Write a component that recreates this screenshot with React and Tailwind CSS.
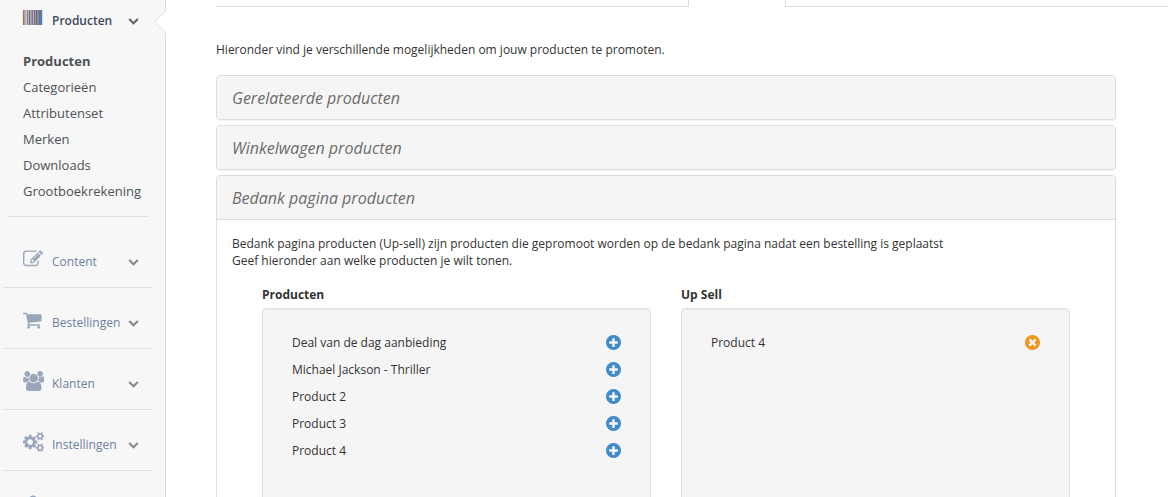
import React, { useState } from "react";

const ICONS = {
  edit: {
    viewBox: "0 0 1792 1792",
    path: "M888 1184l116-116-152-152-116 116v56h96v96h56zm440-720q-16-16-33 1l-350 350q-17 17-1 33t33-1l350-350q17-17 1-33zm80 594v190q0 119-84.5 203.5t-203.5 84.5h-832q-119 0-203.5-84.5t-84.5-203.5v-832q0-119 84.5-203.5t203.5-84.5h832q63 0 117 25 15 7 18 23 3 17-9 29l-49 49q-14 14-32 8-23-6-45-6h-832q-66 0-113 47t-47 113v832q0 66 47 113t113 47h832q66 0 113-47t47-113v-126q0-13 9-22l64-64q15-15 35-7t20 29zm-96-738l288 288-672 672h-288v-288zm444 132l-92 92-288-288 92-92q28-28 68-28t68 28l152 152q28 28 28 68t-28 68z",
  },
  cart: {
    viewBox: "64 0 1792 1792",
    path: "M704 1536q0 52-38 90t-90 38-90-38-38-90 38-90 90-38 90 38 38 90zm896 0q0 52-38 90t-90 38-90-38-38-90 38-90 90-38 90 38 38 90zm128-1088v512q0 24-16.5 42.5t-40.5 21.5l-1044 122q13 60 13 70 0 16-24 64h920q26 0 45 19t19 45-19 45-45 19h-1024q-26 0-45-19t-19-45q0-11 8-31.5t16-36 21.5-40 15.5-29.5l-177-823h-204q-26 0-45-19t-19-45 19-45 45-19h256q16 0 28.5 6.5t19.5 15.5 13 24.5 8 26 5.5 29.5 4.5 26h1201q26 0 45 19t19 45z",
  },
  users: {
    viewBox: "0 0 1920 1792",
    path: "M593 896q-162 5-265 128h-134q-82 0-138-40.5t-56-118.5q0-353 124-353 6 0 43.5 21t97.5 42.5 119 21.5q67 0 133-23-5 37-5 66 0 159 93 286zm1071 637q0 120-73 189.5t-194 69.5h-874q-121 0-194-69.5t-73-189.5q0-53 3.5-103.5t14-109 26.5-108.5 43-97.5 62-81 85.5-53.5 111.5-20q10 0 43 21.5t73 48 107 48 135 21.5 135-21.5 107-48 73-48 43-21.5q61 0 111.5 20t85.5 53.5 62 81 43 97.5 26.5 108.5 14 109 3.5 103.5zm-1024-1277q0 106-75 181t-181 75-181-75-75-181 75-181 181-75 181 75 75 181zm704 384q0 159-112.5 271.5t-271.5 112.5-271.5-112.5-112.5-271.5 112.5-271.5 271.5-112.5 271.5 112.5 112.5 271.5zm576 225q0 78-56 118.5t-138 40.5h-134q-103-123-265-128 93-127 93-286 0-29-5-66 66 23 133 23 59 0 119-21.5t97.5-42.5 43.5-21q124 0 124 353zm-128-609q0 106-75 181t-181 75-181-75-75-181 75-181 181-75 181 75 75 181z",
  },
  cogs: {
    viewBox: "0 0 1920 1792",
    path: "M896 896q0-106-75-181t-181-75-181 75-75 181 75 181 181 75 181-75 75-181zm768 512q0-52-38-90t-90-38-90 38-38 90q0 53 37.5 90.5t90.5 37.5 90.5-37.5 37.5-90.5zm0-1024q0-52-38-90t-90-38-90 38-38 90q0 53 37.5 90.5t90.5 37.5 90.5-37.5 37.5-90.5zm-384 421v185q0 10-7 19.5t-16 10.5l-155 24q-11 35-32 76 34 48 90 115 7 11 7 20 0 12-7 19-23 30-82.5 89.5t-78.5 59.5q-11 0-21-7l-115-90q-37 19-77 31-11 108-23 155-7 24-30 24h-186q-11 0-20-7.5t-10-17.5l-23-153q-34-10-75-31l-118 89q-7 7-20 7-11 0-21-8-144-133-144-160 0-9 7-19 10-14 41-53t47-61q-23-44-35-82l-152-24q-10-1-17-9.5t-7-19.5v-185q0-10 7-19.5t16-10.5l155-24q11-35 32-76-34-48-90-115-7-11-7-20 0-12 7-20 22-30 82-89t79-59q11 0 21 7l115 90q34-18 77-32 11-108 23-154 7-24 30-24h186q11 0 20 7.5t10 17.5l23 153q34 10 75 31l118-89q8-7 20-7 11 0 21 8 144 133 144 160 0 8-7 19-12 16-42 54t-45 60q23 48 34 82l152 23q10 2 17 10.5t7 19.5zm640 533v140q0 16-149 31-12 27-30 52 51 113 51 138 0 4-4 7-122 71-124 71-8 0-46-47t-52-68q-20 2-30 2t-30-2q-14 21-52 68t-46 47q-2 0-124-71-4-3-4-7 0-25 51-138-18-25-30-52-149-15-149-31v-140q0-16 149-31 13-29 30-52-51-113-51-138 0-4 4-7 4-2 35-20t59-34 30-16q8 0 46 46.5t52 67.5q20-2 30-2t30 2q51-71 92-112l6-2q4 0 124 70 4 3 4 7 0 25-51 138 17 23 30 52 149 15 149 31zm0-1024v140q0 16-149 31-12 27-30 52 51 113 51 138 0 4-4 7-122 71-124 71-8 0-46-47t-52-68q-20 2-30 2t-30-2q-14 21-52 68t-46 47q-2 0-124-71-4-3-4-7 0-25 51-138-18-25-30-52-149-15-149-31v-140q0-16 149-31 13-29 30-52-51-113-51-138 0-4 4-7 4-2 35-20t59-34 30-16q8 0 46 46.5t52 67.5q20-2 30-2t30 2q51-71 92-112l6-2q4 0 124 70 4 3 4 7 0 25-51 138 17 23 30 52 149 15 149 31z",
  },
  user: {
    viewBox: "0 0 1664 1792",
    path: "M1536 1399q0 109-62.5 187t-150.5 78h-854q-88 0-150.5-78t-62.5-187q0-85 8.5-160.5t31.5-152 58.5-131 94-89 134.5-34.5q131 128 313 128t313-128q76 0 134.5 34.5t94 89 58.5 131 31.5 152 8.5 160.5zm-256-887q0 159-112.5 271.5t-271.5 112.5-271.5-112.5-112.5-271.5 112.5-271.5 271.5-112.5 271.5 112.5 112.5 271.5z",
  },
  chevron: {
    viewBox: "0 0 1792 1792",
    path: "M1683 808l-742 741q-19 19-45 19t-45-19l-742-741q-19-19-19-45.5t19-45.5l166-165q19-19 45-19t45 19l531 531 531-531q19-19 45-19t45 19l166 165q19 19 19 45.5t-19 45.5z",
  },
  plus: {
    viewBox: "128 128 1536 1536",
    path: "M1344 960v-128q0-26-19-45t-45-19h-256v-256q0-26-19-45t-45-19h-128q-26 0-45 19t-19 45v256h-256q-26 0-45 19t-19 45v128q0 26 19 45t45 19h256v256q0 26 19 45t45 19h128q26 0 45-19t19-45v-256h256q26 0 45-19t19-45zm320-64q0 209-103 385.5t-279.5 279.5-385.5 103-385.5-103-279.5-279.5-103-385.5 103-385.5 279.5-279.5 385.5-103 385.5 103 279.5 279.5 103 385.5z",
  },
  remove: {
    viewBox: "128 128 1536 1536",
    path: "M1277 1122q0-26-19-45l-181-181 181-181q19-19 19-45 0-27-19-46l-90-90q-19-19-46-19-26 0-45 19l-181 181-181-181q-19-19-45-19-27 0-46 19l-90 90q-19 19-19 46 0 26 19 45l181 181-181 181q-19 19-19 45 0 27 19 46l90 90q19 19 46 19 26 0 45-19l181-181 181 181q19 19 45 19 27 0 46-19l90-90q19-19 19-46zm387-226q0 209-103 385.5t-279.5 279.5-385.5 103-385.5-103-279.5-279.5-103-385.5 103-385.5 279.5-279.5 385.5-103 385.5 103 279.5 279.5 103 385.5z",
  },
};

const BARS = [
  "#f6f3a0", "#7c7a94", "#a89cb4", "#dca8b4", "#f0b4bc", "#8480a4", "#98c0d8",
  "#70707c", "#c49cb8", "#90a888", "#7078a8", "#c8a8d0", "#78706c", "#b09888",
  "#5c6c9c", "#a08878", "#5c90d8", "#78706c", "#6c78a8", "#706c8c", "#a8f0f4",
];

const SUBMENU = ["Producten", "Categorieën", "Attributenset", "Merken", "Downloads", "Grootboekrekening"];

const MENU = [
  { label: "Content", icon: "edit" },
  { label: "Bestellingen", icon: "cart" },
  { label: "Klanten", icon: "users" },
  { label: "Instellingen", icon: "cogs" },
];

const PRODUCTS = ["Deal van de dag aanbieding", "Michael Jackson - Thriller", "Product 2", "Product 3", "Product 4"];

function Icon({ name, className }) {
  const icon = ICONS[name];
  return (
    <svg viewBox={icon.viewBox} className={className} fill="currentColor" aria-hidden="true">
      <path d={icon.path} />
    </svg>
  );
}

function Barcode() {
  return (
    <svg viewBox="0 0 21 15" className="h-[15px] w-[21px]" shapeRendering="crispEdges" aria-hidden="true">
      {BARS.map((color, i) => (
        <rect key={i} x={i} y="0" width="1" height="15" fill={color} />
      ))}
    </svg>
  );
}

function Sidebar() {
  return (
    <aside className="relative w-[166px] shrink-0 border-r border-[#d5dfe9] bg-[#f7f7f7]">
      {/* pijl naar het actieve menu */}
      <svg viewBox="0 0 12 24" className="absolute top-[10px] -right-px h-6 w-3" aria-hidden="true">
        <path d="M12 0.5 0.7 12 12 23.5z" fill="#fff" />
        <path d="M11.5 0v1L0.7 12l10.8 11v1" fill="none" stroke="#d5dfe9" />
      </svg>
      <nav>
        <button className="flex h-[41px] w-full items-center pl-[22px] text-left">
          <span className="flex w-[30px] pb-[6px]">
            <Barcode />
          </span>
          <span className="w-[76px] font-semibold text-[#3b4a5c]">Producten</span>
          <Icon name="chevron" className="size-[11px] text-[#666]" />
        </button>
        <ul className="mr-[17px] mb-[10px] ml-2 border-b border-[#d8e0ea] pt-[7px] pb-3 pl-[15px] text-[13px] leading-[26px] text-[#4d5257]">
          {SUBMENU.map((item, i) => (
            <li key={item}>
              <a href="#" className={i === 0 ? "font-bold" : ""}>{item}</a>
            </li>
          ))}
        </ul>
        <ul>
          {MENU.map((item) => (
            <li key={item.label} className="mr-3 ml-[3px] border-b border-[#d8e0ea]">
              <button className="flex h-[60px] w-full items-center pt-2 pl-5 text-left">
                <span className="flex w-[29px] pb-1">
                  <Icon name={item.icon} className="h-5 text-[#9aa7bb]" />
                </span>
                <span className="w-[76px] text-[#6c80a0]">{item.label}</span>
                <Icon name="chevron" className="size-[11px] text-[#8a8a8a]" />
              </button>
            </li>
          ))}
          <li className="mr-3 ml-[3px] pt-[23px] pl-5">
            <Icon name="user" className="h-5 text-[#9aa7bb]" />
          </li>
        </ul>
      </nav>
    </aside>
  );
}

function ProductList({ title, items, icon, color, onSelect }) {
  return (
    <section className="flex flex-1 flex-col">
      <h4 className="mb-[5px] font-bold">{title}</h4>
      <ul className="min-h-[240px] rounded-[4px] border border-[#e0e0e0] bg-[#f5f5f5] px-[29px] pt-5 shadow-[inset_0_1px_1px_rgba(0,0,0,0.05)]">
        {items.map((item) => (
          <li key={item} className="flex h-[27px] items-center justify-between">
            <span>{item}</span>
            <button aria-label={`${title}: ${item}`} className={color} onClick={() => onSelect(item)}>
              <Icon name={icon} className="size-[15px]" />
            </button>
          </li>
        ))}
      </ul>
    </section>
  );
}

function Panel({ title, open, onToggle, children }) {
  return (
    <div className="rounded-[4px] border border-[#dddddd] bg-white shadow-[0_1px_1px_rgba(0,0,0,0.05)]">
      <button
        aria-expanded={open}
        onClick={onToggle}
        className={`block w-full rounded-t-[3px] bg-[#f5f5f5] px-[15px] pt-[11px] pb-[9px] text-left text-base leading-[23px] text-[#6c6c6c] italic ${open ? "border-b border-[#dddddd]" : "rounded-b-[3px]"}`}
      >
        {title}
      </button>
      {open && children}
    </div>
  );
}

export default function App() {
  const [open, setOpen] = useState("bedank");
  const [upSell, setUpSell] = useState(["Product 4"]);

  const toggle = (name) => setOpen(open === name ? "" : name);

  const addProduct = (item) => {
    if (!upSell.includes(item)) {
      setUpSell([...upSell, item]);
    }
  };

  const removeProduct = (item) => setUpSell(upSell.filter((p) => p !== item));

  return (
    <div className="flex h-screen overflow-hidden bg-white font-['Open_Sans',sans-serif] text-xs leading-[17px] text-[#333]">
      <Sidebar />
      <main className="min-w-0 flex-1 pl-[50px]">
        {/* onderkant van de tabbladen */}
        <div className="flex h-[7px]">
          <div className="w-[473px] border-r border-b border-[#dddddd]" />
          <div className="w-24" />
          <div className="flex-1 border-b border-l border-[#dddddd]" />
        </div>
        <div className="mr-[52px] pt-[34px]">
          <p className="mb-[17px]">Hieronder vind je verschillende mogelijkheden om jouw producten te promoten.</p>
          <div className="flex flex-col gap-[5px]">
            <Panel title="Gerelateerde producten" open={open === "gerelateerd"} onToggle={() => toggle("gerelateerd")} />
            <Panel title="Winkelwagen producten" open={open === "winkelwagen"} onToggle={() => toggle("winkelwagen")} />
            <Panel title="Bedank pagina producten" open={open === "bedank"} onToggle={() => toggle("bedank")}>
              <div className="p-[15px]">
                <p>Bedank pagina producten (Up-sell) zijn producten die gepromoot worden op de bedank pagina nadat een bestelling is geplaatst</p>
                <p>Geef hieronder aan welke producten je wilt tonen.</p>
                <div className="mt-[17px] flex gap-[30px] px-[30px]">
                  <ProductList title="Producten" items={PRODUCTS} icon="plus" color="text-[#428bca]" onSelect={addProduct} />
                  <ProductList title="Up Sell" items={upSell} icon="remove" color="text-[#f0971f]" onSelect={removeProduct} />
                </div>
              </div>
            </Panel>
          </div>
        </div>
      </main>
    </div>
  );
}
